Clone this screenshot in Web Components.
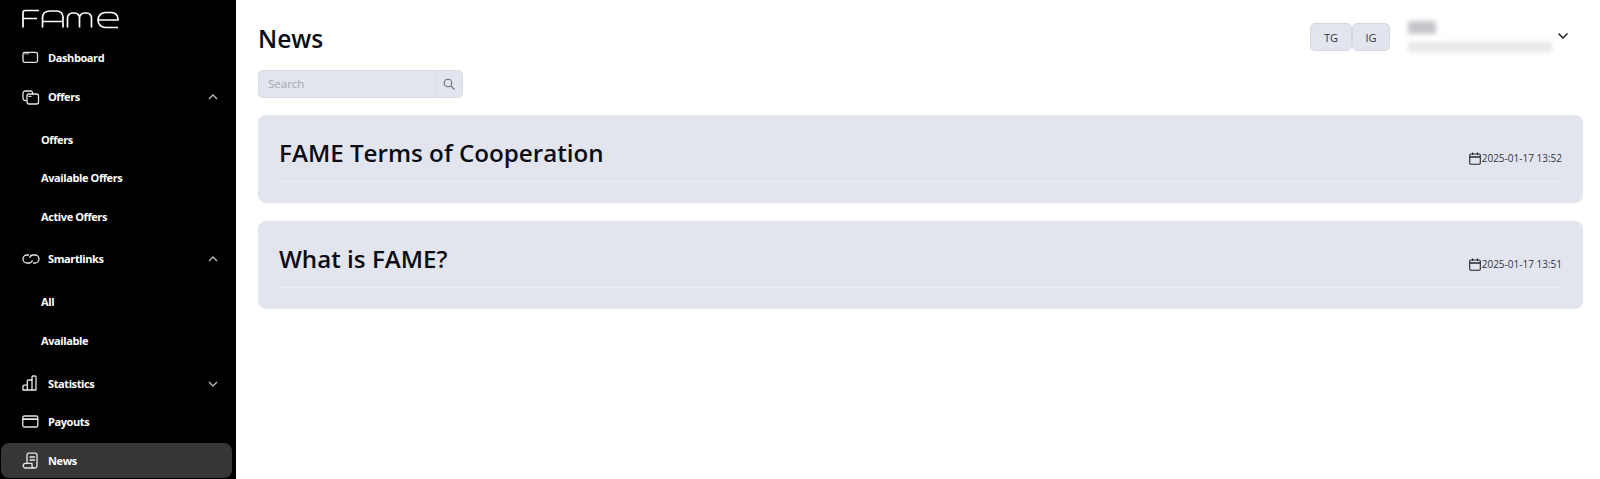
<!DOCTYPE html>
<html lang="en">
<head>
<meta charset="utf-8">
<title>News</title>
<style>
  html, body { margin: 0; height: 100%; background: #fff; overflow: hidden; }
  body { font-family: "Open Sans", "Noto Sans", sans-serif; }
</style>
</head>
<body>
<fame-app>
  <fame-sidebar slot="side">
    <fame-nav-item icon="dashboard" label="Dashboard"></fame-nav-item>
    <fame-nav-item icon="offers" label="Offers" chevron="up"></fame-nav-item>
    <fame-sub-list>
      <fame-sub-item>Offers</fame-sub-item>
      <fame-sub-item>Available Offers</fame-sub-item>
      <fame-sub-item>Active Offers</fame-sub-item>
    </fame-sub-list>
    <fame-nav-item icon="link" label="Smartlinks" chevron="up"></fame-nav-item>
    <fame-sub-list>
      <fame-sub-item>All</fame-sub-item>
      <fame-sub-item>Available</fame-sub-item>
    </fame-sub-list>
    <fame-nav-item icon="stats" label="Statistics" chevron="down"></fame-nav-item>
    <fame-nav-item icon="card" label="Payouts"></fame-nav-item>
    <fame-nav-item icon="news" label="News" active></fame-nav-item>
  </fame-sidebar>
  <fame-header title="News"></fame-header>
  <fame-search></fame-search>
  <fame-news-card date="2025-01-17 13:52">FAME Terms of Cooperation</fame-news-card>
  <fame-news-card date="2025-01-17 13:51">What is FAME?</fame-news-card>
</fame-app>

<script>
  // ---- Icons ----
  const ICONS = {
    dashboard: '<rect x="2" y="4.3" width="14.5" height="10" rx="1.8"/><path d="M3.5 5.8h4" stroke="#777" stroke-width="1.6"/>',
    offers: '<path d="M5 13.5H4.2A2.2 2.2 0 0 1 2 11.3V6.2A2.2 2.2 0 0 1 4.2 4h5.3A2.2 2.2 0 0 1 11.7 6.2v.8"/><rect x="6" y="7" width="11.5" height="10" rx="2"/><path d="M8 9.3h2"/>',
    link: '<path d="M7.5 6H6a4 4 0 0 0 0 8h2.5a4 4 0 0 0 2.8-2.2"/><path d="M12.5 14H14a4 4 0 0 0 0-8h-2.5a4 4 0 0 0-2.8 2.2"/>',
    stats: '<path d="M2 16v-3.8a1 1 0 0 1 1-1h3.3V7a1 1 0 0 1 1-1h3.7V3a1 1 0 0 1 1-1h2a1 1 0 0 1 1 1v13z"/><path d="M6.3 11.2V16M11 6v10"/>',
    card: '<rect x="1.8" y="4" width="15" height="11" rx="1.5"/><path d="M2 7.2h14.6" stroke-width="1.8"/>',
    news: '<path d="M6 12V3.8a1.6 1.6 0 0 1 1.6-1.6h6.8a1.6 1.6 0 0 1 1.6 1.6V14.5a2.5 2.5 0 0 1-2.5 2.5H4.5a2.3 2.3 0 0 1-2.3-2.3 2.3 2.3 0 0 1 2.3-2.3h6.5v2.3a2.3 2.3 0 0 0 2.3 2.3"/><path d="M9 6h4.5M9 9h4.5"/>'
  };

  // ---- App shell ----
  class FameApp extends HTMLElement {
    constructor() {
      super();
      this.attachShadow({ mode: "open" }).innerHTML = `
        <style>
          :host { display: flex; height: 479px; overflow: hidden; color: #0c0c14; }
          main { flex: 1; min-width: 0; padding: 0 17px 0 22px; display: flex; flex-direction: column; }
          ::slotted(fame-news-card) { margin-bottom: 18px; }
        </style>
        <slot name="side"></slot>
        <main><slot></slot></main>`;
    }
  }

  // ---- Sidebar ----
  class FameSidebar extends HTMLElement {
    constructor() {
      super();
      this.attachShadow({ mode: "open" }).innerHTML = `
        <style>
          :host { display: flex; flex-direction: column; flex: none; width: 236px; height: 479px; background: #000; box-sizing: border-box; padding: 0 4px 0 1px; }
          svg { display: block; flex: none; margin: 8px 0 10px 20px; }
        </style>
        <svg width="100" height="21" viewBox="0 0 100 21" fill="none" stroke="#fff" stroke-width="1.7">
          <path d="M18 2.500H4a2 2 0 0 0-2 2V19.500M2 10.500h14"/>
          <path d="M21.500 19.500V10Q21.500 3 29 3h7a6 6 0 0 1 6 6V19.500M21.500 13.500H42"/>
          <path d="M46.500 19.500V10a5 5 0 0 1 5-5h2a5 5 0 0 1 5 5V19.500M58.500 10a5 5 0 0 1 5-5h2a5 5 0 0 1 5 5V19.500"/>
          <path d="M77 12H97V11a6.500 6.500 0 0 0-6.500-6.500H84.500a7.500 7.500 0 0 0 0 15H97"/>
        </svg>
        <slot></slot>`;
    }
  }

  class FameNavItem extends HTMLElement {
    connectedCallback() {
      if (this.shadowRoot) return;
      const chev = this.getAttribute("chevron");
      const chevPath = chev === "up" ? "M1 6l4-4 4 4" : "M1 2l4 4 4-4";
      this.attachShadow({ mode: "open" }).innerHTML = `
        <style>
          :host { display: flex; align-items: center; flex: none; height: 34.4px; margin: 2px 0; box-sizing: border-box; padding-left: 20px; border-radius: 8px; color: #fff; font: 700 11px "Open Sans", "Noto Sans", sans-serif; letter-spacing: -.4px; }
          :host([active]) { background: #363636; }
          .ic { width: 20px; height: 20px; flex: none; fill: none; stroke: #e6e6e6; stroke-width: 1.3; stroke-linecap: round; stroke-linejoin: round; }
          .label { margin: 0 0 1px 7px; flex: 1; }
          .chev { width: 10px; height: 8px; flex: none; margin-right: 14px; fill: none; stroke: #bdbdbd; stroke-width: 1.3; }
        </style>
        <svg class="ic" viewBox="0 0 20 20">${ICONS[this.getAttribute("icon")]}</svg>
        <span class="label">${this.getAttribute("label")}</span>
        ${chev ? `<svg class="chev" viewBox="0 0 10 8"><path d="${chevPath}"/></svg>` : ""}`;
    }
  }

  class FameSubList extends HTMLElement {
    constructor() {
      super();
      this.attachShadow({ mode: "open" }).innerHTML = `
        <style>:host { display: flex; flex-direction: column; flex: none; padding: 4.5px 0; }</style>
        <slot></slot>`;
    }
  }

  class FameSubItem extends HTMLElement {
    constructor() {
      super();
      this.attachShadow({ mode: "open" }).innerHTML = `
        <style>:host { display: flex; align-items: center; height: 38.5px; box-sizing: border-box; padding: 0 0 1px 40px; color: #fff; font: 700 11px "Open Sans", "Noto Sans", sans-serif; letter-spacing: -.4px; }</style>
        <slot></slot>`;
    }
  }

  // ---- Header ----
  class FameHeader extends HTMLElement {
    connectedCallback() {
      if (this.shadowRoot) return;
      this.attachShadow({ mode: "open" }).innerHTML = `
        <style>
          :host { display: flex; align-items: center; flex: none; height: 70px; box-sizing: border-box; padding-top: 6px; }
          h1 { margin: 0; flex: 1; font: 550 24.5px "Open Sans", "Noto Sans", sans-serif; color: #0c0c14; }
          .btns { display: flex; margin-top: -2px; }
          button { height: 28px; box-sizing: border-box; background: #e2e5ed; border: 1px solid #d5d7dd; border-radius: 5px; color: #33333d; font: 400 11px "Open Sans", "Noto Sans", sans-serif; padding: 0; }
          .tg { width: 42px; }
          .ig { width: 38px; }
          .user { width: 146px; margin: -4px 0 0 18px; display: flex; flex-direction: column; gap: 8px; filter: blur(2.5px); }
          .user i { display: block; background: #c4c6cb; }
          .name { width: 28px; height: 13px; }
          .mail { width: 144px; height: 10px; opacity: .4; }
          .more { width: 12px; height: 8px; margin: -4px 14px 0 3px; fill: none; stroke: #15151c; stroke-width: 1.4; }
        </style>
        <h1>${this.getAttribute("title")}</h1>
        <div class="btns"><button class="tg">TG</button><button class="ig">IG</button></div>
        <div class="user"><i class="name"></i><i class="mail"></i></div>
        <svg class="more" viewBox="0 0 12 8"><path d="M1.5 1.5L6 6l4.5-4.5"/></svg>`;
    }
  }

  // ---- Search ----
  class FameSearch extends HTMLElement {
    constructor() {
      super();
      this.attachShadow({ mode: "open" }).innerHTML = `
        <style>
          :host { display: flex; flex: none; width: 205px; height: 28px; box-sizing: border-box; margin-bottom: 17px; background: #e2e5ed; border: 1px solid #d9dbe1; border-radius: 5px; }
          input { flex: 1; min-width: 0; border: 0; outline: 0; background: none; padding: 0 0 2px 9px; font: 400 11.5px "Open Sans", "Noto Sans", sans-serif; color: #333; }
          input::placeholder { color: #a4a6ad; opacity: 1; }
          span { width: 26px; flex: none; border-left: 1px solid #d9dbe1; display: flex; align-items: center; justify-content: center; }
          svg { width: 12px; height: 12px; fill: none; stroke: #6b6c72; stroke-width: 1.1; }
        </style>
        <input placeholder="Search">
        <span><svg viewBox="0 0 12 12"><circle cx="5" cy="5" r="3.8"/><path d="M7.8 7.8L11.5 11.5"/></svg></span>`;
    }
  }

  // ---- News card ----
  class FameNewsCard extends HTMLElement {
    connectedCallback() {
      if (this.shadowRoot) return;
      this.attachShadow({ mode: "open" }).innerHTML = `
        <style>
          :host { display: block; flex: none; height: 88px; box-sizing: border-box; padding: 0 21px; background: #e2e5ed; border-radius: 8px; }
          .row { display: flex; height: 67px; box-sizing: border-box; border-bottom: 1px solid #eceef3; justify-content: space-between; }
          .title { font: 550 24.2px "Open Sans", "Noto Sans", sans-serif; color: #0c0c14; padding-top: 20px; line-height: 36px; }
          .date { display: flex; align-items: center; gap: 1px; align-self: flex-start; margin-top: 36px; font: 400 10px "Open Sans", "Noto Sans", sans-serif; color: #33343e; }
          svg { width: 12px; height: 13px; fill: none; stroke: #23242b; stroke-width: 1.1; }
        </style>
        <div class="row">
          <div class="title"><slot></slot></div>
          <div class="date">
            <svg viewBox="0 0 12 13"><rect x=".7" y="2" width="10.6" height="10.3" rx="1.2"/><path d="M.7 5h10.6" stroke-width="1.5"/><path d="M3.5 .5v2.5M8.5 .5v2.500"/></svg>
            <span>${this.getAttribute("date")}</span>
          </div>
        </div>`;
    }
  }

  customElements.define("fame-app", FameApp);
  customElements.define("fame-sidebar", FameSidebar);
  customElements.define("fame-nav-item", FameNavItem);
  customElements.define("fame-sub-list", FameSubList);
  customElements.define("fame-sub-item", FameSubItem);
  customElements.define("fame-header", FameHeader);
  customElements.define("fame-search", FameSearch);
  customElements.define("fame-news-card", FameNewsCard);
</script>
</body>
</html>
